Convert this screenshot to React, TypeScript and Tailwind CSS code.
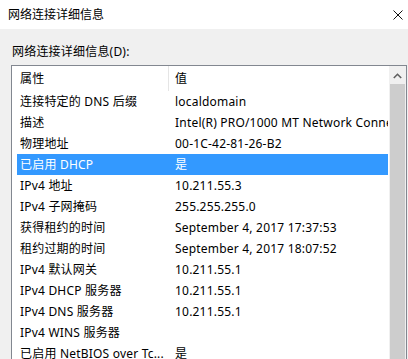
import React from 'react'

const rows: [string, string][] = [
  ['连接特定的 DNS 后缀', 'localdomain'],
  ['描述', 'Intel(R) PRO/1000 MT Network Connection'],
  ['物理地址', '00-1C-42-81-26-B2'],
  ['已启用 DHCP', '是'],
  ['IPv4 地址', '10.211.55.3'],
  ['IPv4 子网掩码', '255.255.255.0'],
  ['获得租约的时间', 'September 4, 2017 17:37:53'],
  ['租约过期的时间', 'September 4, 2017 18:07:52'],
  ['IPv4 默认网关', '10.211.55.1'],
  ['IPv4 DHCP 服务器', '10.211.55.1'],
  ['IPv4 DNS 服务器', '10.211.55.1'],
  ['IPv4 WINS 服务器', ''],
  ['已启用 NetBIOS over Tc...', '是'],
]

const selected = 3

export default function App() {
  return (
    <div className="w-[408px] h-[359px] overflow-hidden bg-[#f0f0f0] text-[12px] text-black font-['Noto_Sans','Noto_Sans_CJK_SC',sans-serif]">
      {/* title bar */}
      <div className="h-[29px] bg-white flex items-center justify-between pl-[8px] pr-[5px]">
        <span className="leading-[16px]">网络连接详细信息</span>
        <svg width="10" height="10" viewBox="0 0 10 10">
          <path d="M0.5 0.5L9.5 9.5M9.5 0.5L0.5 9.5" stroke="#111" strokeWidth="1" />
        </svg>
      </div>

      <div className="pl-[11px] pt-[15px]">
        <div className="leading-[16px] pl-[1px] tracking-[0.2px]">网络连接详细信息(D):</div>

        <div className="mt-[5px] w-[396px] h-[400px] border border-[#828790] bg-white flex tracking-[0.2px]">
          <div className="flex-1 min-w-0 overflow-hidden">
            {/* header */}
            <div className="h-[25px] flex items-center">
              <div className="w-[156px] pl-[8px] leading-[16px]">属性</div>
              <div className="w-px h-[25px] bg-[#e5e5e5]" />
              <div className="pl-[6px] leading-[16px]">值</div>
            </div>
            {/* rows */}
            <div className="pl-[5px]">
              {rows.map(([k, v], i) => (
                <div
                  key={i}
                  className={`h-[21px] w-[371px] flex items-center whitespace-nowrap overflow-hidden ${
                    i === selected ? 'bg-[#3399ff] text-white' : ''
                  }`}
                >
                  <div className="w-[151px] shrink-0 pl-[3px] overflow-hidden leading-[16px]">{k}</div>
                  <div className="pl-[7px] leading-[16px]">{v}</div>
                </div>
              ))}
            </div>
          </div>
          {/* scrollbar */}
          <div className="w-[17px] shrink-0 bg-[#f0f0f0] flex flex-col">
            <div className="h-[2px]" />
            <div className="h-[16px] flex items-center justify-center">
              <svg width="9" height="6" viewBox="0 0 9 6">
                <path d="M0.8 5L4.5 1.3L8.2 5" stroke="#606060" strokeWidth="1.6" fill="none" />
              </svg>
            </div>
            <div className="flex-1 bg-[#cdcdcd] mx-[1px]" />
          </div>
        </div>
      </div>
    </div>
  )
}
